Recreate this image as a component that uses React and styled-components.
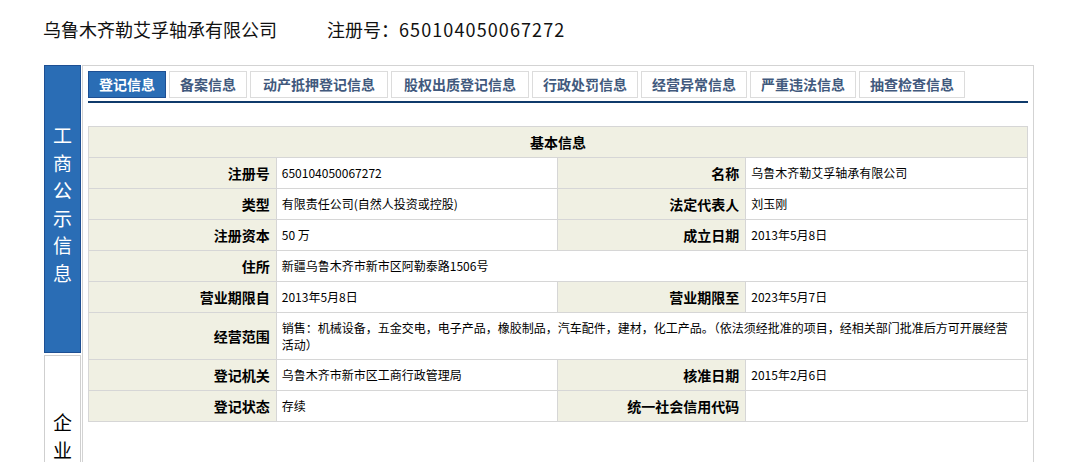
import React from "react";
import styled, { createGlobalStyle } from "styled-components";

const Global = createGlobalStyle`
  html, body { margin: 0; padding: 0; background: #fff; }
  body { font-family: "Noto Sans CJK SC", "Noto Sans", sans-serif; color: #000; }
`;

const Page = styled.div`
  width: 1078px;
  height: 462px;
  overflow: hidden;
`;

const Header = styled.div`
  height: 65px;
  box-sizing: border-box;
  padding: 17px 0 0 43px;
  display: flex;
  gap: 50px;
  font-size: 18px;
  line-height: 24px;
  color: #111;
`;

const RegNo = styled.span`
  letter-spacing: 1.1px;
`;

const Body = styled.div`
  display: flex;
  gap: 1px;
  padding-left: 44px;
`;

const Side = styled.div`
  width: 37px;
  display: flex;
  flex-direction: column;
  gap: 2px;
`;

const SideBox = styled.div`
  box-sizing: border-box;
  height: ${(p) => p.$h}px;
  border: 1px solid ${(p) => (p.$active ? "#1d4f93" : "#cfcfcf")};
  background: ${(p) => (p.$active ? "#2a6db5" : "#fff")};
  color: ${(p) => (p.$active ? "#fff" : "#000")};
  display: flex;
  flex-direction: column;
  align-items: center;
  padding-top: ${(p) => p.$pt}px;
  font-size: 19px;
  line-height: 27.5px;
`;

const Main = styled.div`
  width: 952px;
  box-sizing: border-box;
  border: 1px solid #d3d3d3;
  border-bottom: none;
  padding: 5px 5px 0 5px;
  height: 400px;
`;

const TabBar = styled.div`
  display: flex;
  gap: 3px;
  padding-bottom: 3px;
  border-bottom: 2px solid #0f3a6b;
`;

const Tab = styled.div`
  box-sizing: border-box;
  height: 27px;
  padding: 0 ${(p) => p.$px}px;
  border: 1px solid ${(p) => (p.$active ? "#1d4f93" : "#dcdcdc")};
  background: ${(p) => (p.$active ? "#2a6db5" : "#fff")};
  color: ${(p) => (p.$active ? "#fff" : "#41597d")};
  font-size: 14px;
  font-weight: bold;
  line-height: 25px;
  white-space: nowrap;
`;

const Table = styled.table`
  margin-top: 23px;
  width: 940px;
  border-collapse: collapse;
  table-layout: fixed;
  border: 1px solid #d6d6d6;
`;

const HeadCell = styled.th`
  height: 30px;
  padding: 0;
  background: #f0f0e3;
  border: 1px solid #d6d6d6;
  font-size: 14px;
  font-weight: bold;
  text-align: center;
`;

const Label = styled.td`
  height: ${(p) => p.$h || 30}px;
  padding: 0 6px 0 0;
  background: #f0f0e3;
  border: 1px solid #d6d6d6;
  text-align: right;
  font-size: 14px;
  font-weight: bold;
  white-space: nowrap;
`;

const Value = styled.td`
  padding: 0 8px 0 5px;
  background: #fff;
  border: 1px solid #d6d6d6;
  font-size: 12px;
  line-height: 17.5px;
  vertical-align: middle;
`;

const tabs = [
  ["登记信息", 10],
  ["备案信息", 10],
  ["动产抵押登记信息", 12],
  ["股权出质登记信息", 12],
  ["行政处罚信息", 10],
  ["经营异常信息", 10],
  ["严重违法信息", 10],
  ["抽查检查信息", 10],
];

export default function App() {
  return (
    <Page>
      <Global />
      <Header>
        <span>乌鲁木齐勒艾孚轴承有限公司</span>
        <span>
          注册号：<RegNo>650104050067272</RegNo>
        </span>
      </Header>
      <Body>
        <Side>
          <SideBox $active $h={288} $pt={55}>
            {"工商公示信息".split("").map((c, i) => (
              <span key={i}>{c}</span>
            ))}
          </SideBox>
          <SideBox $h={120} $pt={52}>
            {"企业".split("").map((c, i) => (
              <span key={i}>{c}</span>
            ))}
          </SideBox>
        </Side>
        <Main>
          <TabBar>
            {tabs.map(([t, px], i) => (
              <Tab key={t} $active={i === 0} $px={px}>
                {t}
              </Tab>
            ))}
          </TabBar>
          <Table>
            <colgroup>
              <col style={{ width: "20%" }} />
              <col style={{ width: "30%" }} />
              <col style={{ width: "20%" }} />
              <col style={{ width: "30%" }} />
            </colgroup>
            <thead>
              <tr>
                <HeadCell colSpan={4}>基本信息</HeadCell>
              </tr>
            </thead>
            <tbody>
              <tr>
                <Label>注册号</Label>
                <Value>650104050067272</Value>
                <Label>名称</Label>
                <Value>乌鲁木齐勒艾孚轴承有限公司</Value>
              </tr>
              <tr>
                <Label>类型</Label>
                <Value>有限责任公司(自然人投资或控股)</Value>
                <Label>法定代表人</Label>
                <Value>刘玉刚</Value>
              </tr>
              <tr>
                <Label>注册资本</Label>
                <Value>50 万</Value>
                <Label>成立日期</Label>
                <Value>2013年5月8日</Value>
              </tr>
              <tr>
                <Label>住所</Label>
                <Value colSpan={3}>新疆乌鲁木齐市新市区阿勒泰路1506号</Value>
              </tr>
              <tr>
                <Label>营业期限自</Label>
                <Value>2013年5月8日</Value>
                <Label>营业期限至</Label>
                <Value>2023年5月7日</Value>
              </tr>
              <tr>
                <Label $h={46}>经营范围</Label>
                <Value colSpan={3}>
                  销售：机械设备，五金交电，电子产品，橡胶制品，汽车配件，建材，化工产品。（依法须经批准的项目，经相关部门批准后方可开展经营活动）
                </Value>
              </tr>
              <tr>
                <Label>登记机关</Label>
                <Value>乌鲁木齐市新市区工商行政管理局</Value>
                <Label>核准日期</Label>
                <Value>2015年2月6日</Value>
              </tr>
              <tr>
                <Label>登记状态</Label>
                <Value>存续</Value>
                <Label>统一社会信用代码</Label>
                <Value></Value>
              </tr>
            </tbody>
          </Table>
        </Main>
      </Body>
    </Page>
  );
}
